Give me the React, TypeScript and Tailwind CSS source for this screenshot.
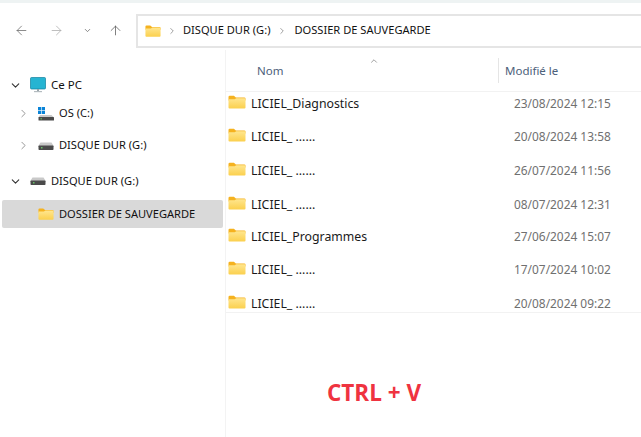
import React from 'react';
import { ArrowLeft, ArrowRight, ArrowUp, ChevronDown, ChevronRight, ChevronUp } from 'lucide-react';

const Folder = ({ className = '' }: { className?: string }) => (
  <svg viewBox="0 0 18 14" className={className}>
    <defs>
      <linearGradient id="fold" x1="0" y1="0" x2="0" y2="1">
        <stop offset="0" stopColor="#ffe68f" />
        <stop offset="1" stopColor="#fbd04e" />
      </linearGradient>
    </defs>
    <path d="M0.5 2a1.2 1.2 0 0 1 1.2-1.2h4.2l2 1.6h8.4a1.2 1.2 0 0 1 1.2 1.2v2H0.5z" fill="#f5b21f" />
    <path d="M0.5 4.2h6.2l1.6-1h8.2a1 1 0 0 1 1 1v8.2a1 1 0 0 1-1 1H1.5a1 1 0 0 1-1-1z" fill="url(#fold)" />
  </svg>
);

const Drive = () => (
  <svg viewBox="0 0 16 8" className="h-2 w-4 shrink-0">
    <path d="M2.5 0.5h11L16 4.5H0z" fill="#c9c9c9" />
    <rect x="0.5" y="3.5" width="15" height="4.5" rx="0.8" fill="#4a4a4a" />
    <rect x="3" y="5.2" width="1.5" height="1.2" fill="#6fdc6f" />
  </svg>
);

const Monitor = () => (
  <svg viewBox="0 0 16 16" className="h-4 w-4 shrink-0">
    <rect x="0.5" y="0.5" width="15" height="11.5" rx="1" fill="#26b4d2" stroke="#137f9e" strokeWidth="0.7" />
    <rect x="7" y="12" width="2" height="2.2" fill="#9aa5ab" />
    <rect x="4" y="14" width="8" height="1.2" fill="#b4bcc0" />
  </svg>
);

const WinDrive = () => (
  <svg viewBox="0 0 16 14" className="h-3.5 w-4 shrink-0">
    <rect x="0" y="0" width="3.2" height="3.2" fill="#0a84d8" />
    <rect x="3.8" y="0" width="3.2" height="3.2" fill="#0a84d8" />
    <rect x="0" y="3.8" width="3.2" height="3.2" fill="#0a84d8" />
    <rect x="3.8" y="3.8" width="3.2" height="3.2" fill="#0a84d8" />
    <path d="M2 8h11.5L16 10.5H0.5z" fill="#c9c9c9" />
    <rect x="0.5" y="10" width="15.5" height="3.6" rx="0.6" fill="#4a4a4a" />
    <rect x="2.5" y="11.3" width="1.4" height="1" fill="#6fdc6f" />
  </svg>
);

const files = [
  { name: 'LICIEL_Diagnostics', date: '23/08/2024 12:15', h: 'h-[33px]' },
  { name: 'LICIEL_ ......', date: '20/08/2024 13:58', h: 'h-[34px]' },
  { name: 'LICIEL_ ......', date: '26/07/2024 11:56', h: 'h-[34px]' },
  { name: 'LICIEL_ ......', date: '08/07/2024 12:31', h: 'h-[32px]' },
  { name: 'LICIEL_Programmes', date: '27/06/2024 15:07', h: 'h-[33px]' },
  { name: 'LICIEL_ ......', date: '17/07/2024 10:02', h: 'h-[34px]' },
  { name: 'LICIEL_ ......', date: '20/08/2024 09:22', h: 'h-[17px]' },
];

export default function App() {
  return (
    <div className="flex h-[437px] w-[641px] flex-col overflow-hidden bg-white font-['Noto_Sans',sans-serif] text-[11.1px] text-[#111]">
      <div className="h-[3px] bg-[#eef3f3]" />
      {/* toolbar */}
      <div className="flex h-[47px] items-center pl-[14px] pt-[8px]">
        <ArrowLeft size={15} strokeWidth={1.2} className="text-[#666]" />
        <ArrowRight size={15} strokeWidth={1.2} className="ml-[20px] text-[#aaa]" />
        <ChevronDown size={9} strokeWidth={2} className="ml-[19px] text-[#666]" />
        <ArrowUp size={15} strokeWidth={1.2} className="ml-[16px] text-[#555]" />
        <div className="ml-[13px] flex h-[34px] flex-1 items-center border-2 border-r-0 border-[#e5e5e5] pl-[7px]">
          <Folder className="h-3.5 w-4" />
          <ChevronRight size={10} strokeWidth={1.5} className="ml-[6px] text-[#666]" />
          <span className="ml-[6px]">DISQUE DUR (G:)</span>
          <ChevronRight size={10} strokeWidth={1.5} className="ml-[7px] text-[#666]" />
          <span className="ml-[7px]">DOSSIER DE SAUVEGARDE</span>
        </div>
      </div>

      <div className="flex flex-1">
        {/* navigation tree */}
        <nav className="w-[225px] shrink-0 pt-[22px]">
          <div className="flex h-[26px] items-center pl-[9px]">
            <ChevronDown size={13} strokeWidth={2} className="text-[#333]" />
            <span className="ml-[8px]"><Monitor /></span>
            <span className="ml-[5px] text-[11.5px]">Ce PC</span>
          </div>
          <div className="mt-[1px] flex h-[29px] items-center pl-[17px]">
            <ChevronRight size={13} strokeWidth={1.6} className="text-[#888]" />
            <span className="ml-[8px]"><WinDrive /></span>
            <span className="ml-[5px]">OS (C:)</span>
          </div>
          <div className="mt-[3px] flex h-[29px] items-center pl-[17px]">
            <ChevronRight size={13} strokeWidth={1.6} className="text-[#888]" />
            <span className="ml-[8px]"><Drive /></span>
            <span className="ml-[5px]">DISQUE DUR (G:)</span>
          </div>
          <div className="mt-[8px] flex h-[26px] items-center pl-[9px]">
            <ChevronDown size={13} strokeWidth={2} className="text-[#333]" />
            <span className="ml-[8px]"><Drive /></span>
            <span className="ml-[5px]">DISQUE DUR (G:)</span>
          </div>
          <div className="ml-[2px] mt-[6px] flex h-[28px] w-[221px] items-center rounded-[2px] bg-[#d9d9d9] pl-[36px]">
            <Folder className="h-3.5 w-4" />
            <span className="ml-[5px]">DOSSIER DE SAUVEGARDE</span>
          </div>
        </nav>

        {/* file list */}
        <main className="flex flex-1 flex-col border-l border-[#f3f3f3]">
          <div className="relative flex h-[42px] items-center border-b border-[#f2f2f2] text-[11.5px] text-[#4c607a]">
            <span className="ml-[31px] w-[241px]">Nom</span>
            <span className="h-[25px] w-px bg-[#e5e5e5]" />
            <span className="ml-[6px]">Modifié le</span>
            <ChevronUp size={10} strokeWidth={1.5} className="absolute left-[143px] top-[6px] text-[#666]" />
          </div>
          <div className="border-b border-[#f2f2f2] pt-[3px]">
            {files.map((f, i) => (
              <div key={i} className={`flex items-start pl-[2px] leading-[17px] ${f.h}`}>
                <Folder className="h-3.5 w-[18px]" />
                <span className="ml-[5px] w-[263px] text-[12.3px] text-[#1a1a1a]">{f.name}</span>
                <span className="text-[11.9px] text-[#707070]">{f.date}</span>
              </div>
            ))}
          </div>
          <p className="ml-[101px] mt-[69px] font-['Open_Sans',sans-serif] text-[22.5px] leading-none font-bold text-[#ef3340]">CTRL + V</p>
        </main>
      </div>
    </div>
  );
}
